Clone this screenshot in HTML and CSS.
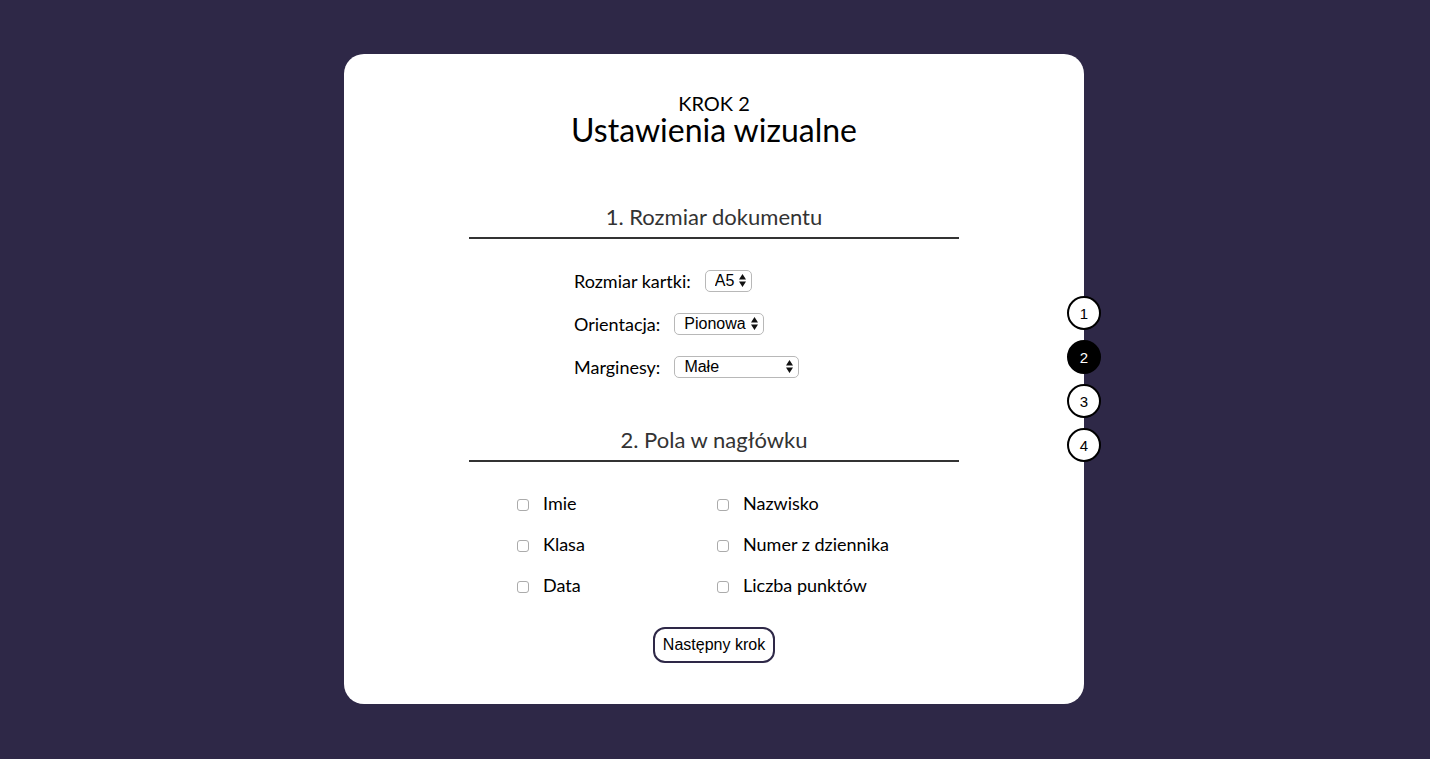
FILE: index.html
```html
<!DOCTYPE html>
<html lang="pl">
<head>
<meta charset="utf-8">
<title>Ustawienia wizualne</title>
<link rel="stylesheet" href="styles.css">
</head>
<body>
<div class="page">
  <div class="card">
    <div class="step-label">KROK 2</div>
    <h1 class="title">Ustawienia wizualne</h1>

    <section class="section">
      <h2 class="section-title">1. Rozmiar dokumentu</h2>
      <div class="form">
        <div class="row">
          <label class="row-label" for="size">Rozmiar kartki:</label>
          <span class="select-wrap">
            <select id="size" class="select">
              <option>A5</option>
              <option>A4</option>
            </select>
            <svg class="select-arrow" width="7" height="13" viewBox="0 0 7 13" aria-hidden="true"><path d="M0 5.5 L3.5 0 L7 5.5 Z M0 7.5 L7 7.5 L3.5 13 Z" fill="#111"/></svg>
          </span>
        </div>
        <div class="row">
          <label class="row-label" for="orient">Orientacja:</label>
          <span class="select-wrap">
            <select id="orient" class="select">
              <option>Pionowa</option>
              <option>Pozioma</option>
            </select>
            <svg class="select-arrow" width="7" height="13" viewBox="0 0 7 13" aria-hidden="true"><path d="M0 5.5 L3.5 0 L7 5.5 Z M0 7.5 L7 7.5 L3.5 13 Z" fill="#111"/></svg>
          </span>
        </div>
        <div class="row">
          <label class="row-label" for="margins">Marginesy:</label>
          <span class="select-wrap">
            <select id="margins" class="select select-wide">
              <option>Małe</option>
              <option>Średnie</option>
              <option>Duże</option>
            </select>
            <svg class="select-arrow" width="7" height="13" viewBox="0 0 7 13" aria-hidden="true"><path d="M0 5.5 L3.5 0 L7 5.5 Z M0 7.5 L7 7.5 L3.5 13 Z" fill="#111"/></svg>
          </span>
        </div>
      </div>
    </section>

    <section class="section section-second">
      <h2 class="section-title">2. Pola w nagłówku</h2>
      <div class="fields">
        <label class="field"><input type="checkbox" class="check">Imie</label>
        <label class="field"><input type="checkbox" class="check">Nazwisko</label>
        <label class="field"><input type="checkbox" class="check">Klasa</label>
        <label class="field"><input type="checkbox" class="check">Numer z dziennika</label>
        <label class="field"><input type="checkbox" class="check">Data</label>
        <label class="field"><input type="checkbox" class="check">Liczba punktów</label>
      </div>
    </section>

    <div class="actions">
      <button class="next" type="button">Następny krok</button>
    </div>

    <nav class="steps">
      <div class="step">1</div>
      <div class="step step-active">2</div>
      <div class="step">3</div>
      <div class="step">4</div>
    </nav>
  </div>
</div>
</body>
</html>
```

FILE: styles.css
```css
* {
  box-sizing: border-box;
}

body {
  margin: 0;
  background: #2e2847;
  font-family: Lato, "Noto Sans", sans-serif;
  color: #000;
}

.page {
  display: flex;
  justify-content: center;
  padding: 54px 2px 0 0;
  min-height: 759px;
}

.card {
  position: relative;
  width: 740px;
  height: 650px;
  background: #fff;
  border-radius: 20px;
  padding-top: 38px;
}

.step-label {
  text-align: center;
  font-size: 20px;
  line-height: 22px;
}

.title {
  margin: 0;
  text-align: center;
  font-size: 32px;
  line-height: 32px;
  font-weight: 400;
}

.section {
  width: 490px;
  margin: 58px auto 0;
}

.section-second {
  margin-top: 39px;
}

.section-title {
  margin: 0;
  padding-bottom: 7px;
  border-bottom: 2px solid #333;
  text-align: center;
  font-size: 22px;
  line-height: 26px;
  font-weight: 400;
  color: #333;
}

.form {
  padding: 20px 0 0 105px;
}

.row {
  display: flex;
  align-items: center;
  height: 43px;
  font-size: 18px;
}

.select-wrap {
  position: relative;
  display: inline-flex;
  margin-left: 14px;
}

.select {
  appearance: none;
  -webkit-appearance: none;
  height: 22px;
  padding: 0 16px 0 9px;
  background: #fff;
  border: 1px solid #b8b8b8;
  border-radius: 5px;
  font: 16px "Liberation Sans", Arial, sans-serif;
  color: #000;
}

.select-wide {
  width: 125px;
}

.select-arrow {
  position: absolute;
  right: 6px;
  top: 4px;
  pointer-events: none;
}

.fields {
  width: 400px;
  margin: 0 auto;
  padding-top: 20px;
  display: grid;
  grid-template-columns: 200px 200px;
  grid-auto-rows: 41px;
}

.field {
  display: flex;
  align-items: center;
  font-size: 18px;
}

.check {
  appearance: none;
  -webkit-appearance: none;
  width: 12px;
  height: 12px;
  margin: 4px 14px 0 3px;
  background: #fff;
  border: 1px solid #ababab;
  border-radius: 3px;
}

.actions {
  display: flex;
  justify-content: center;
  margin-top: 22px;
}

.next {
  height: 36px;
  padding: 0 8px;
  background: #fff;
  border: 2px solid #2e2847;
  border-radius: 12px;
  font: 16px "Liberation Sans", Arial, sans-serif;
  color: #000;
}

.steps {
  position: absolute;
  left: 723px;
  top: 242px;
  display: flex;
  flex-direction: column;
  gap: 10px;
}

.step {
  width: 34px;
  height: 34px;
  border: 2px solid #000;
  border-radius: 50%;
  background: #fff;
  display: flex;
  align-items: center;
  justify-content: center;
  font: 15px "Liberation Sans", Arial, sans-serif;
  color: #000;
}

.step-active {
  background: #000;
  color: #fff;
}
```
